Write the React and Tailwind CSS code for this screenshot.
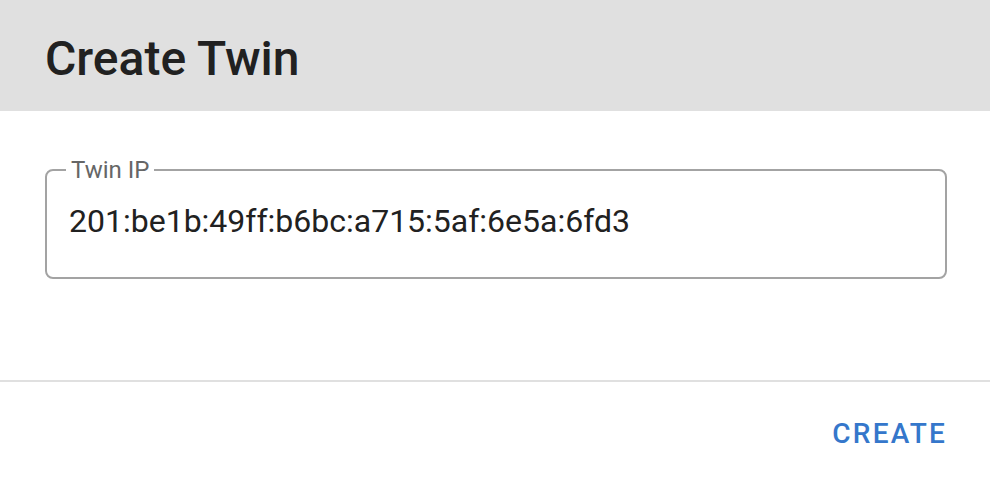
import React from 'react';

const TwinIpField = ({ label, value }) => (
  <div className="relative h-[110px] rounded-[8px] border-2 border-[#a3a3a3] flex items-center px-[22px]">
    <span className="absolute left-[19px] top-[-15px] bg-white px-[5px] text-[24px] leading-[28px] text-[#666666]">
      {label}
    </span>
    <span className="text-[32px] leading-[40px] text-[#212121] mt-[-6px]">{value}</span>
  </div>
);

export default function App() {
  return (
    <div className="w-[990px] h-[478px] bg-white flex flex-col font-['Roboto',sans-serif]">
      <div className="h-[111px] shrink-0 bg-[#e0e0e0] px-[45px] pt-[35px]">
        <h2 className="text-[48px] leading-[48px] font-medium text-[#212121]">Create Twin</h2>
      </div>

      <div className="h-[269px] shrink-0 pl-[45px] pr-[43px] pt-[58px]">
        <TwinIpField label="Twin IP" value="201:be1b:49ff:b6bc:a715:5af:6e5a:6fd3" />
      </div>

      <div className="h-[2px] shrink-0 bg-[#e0e0e0]" />

      <div className="flex-1 flex items-center justify-end pr-[43px] pt-[8px]">
        <button className="text-[28px] leading-none font-medium tracking-[2.2px] text-[#3577cb] uppercase">
          Create
        </button>
      </div>
    </div>
  );
}
